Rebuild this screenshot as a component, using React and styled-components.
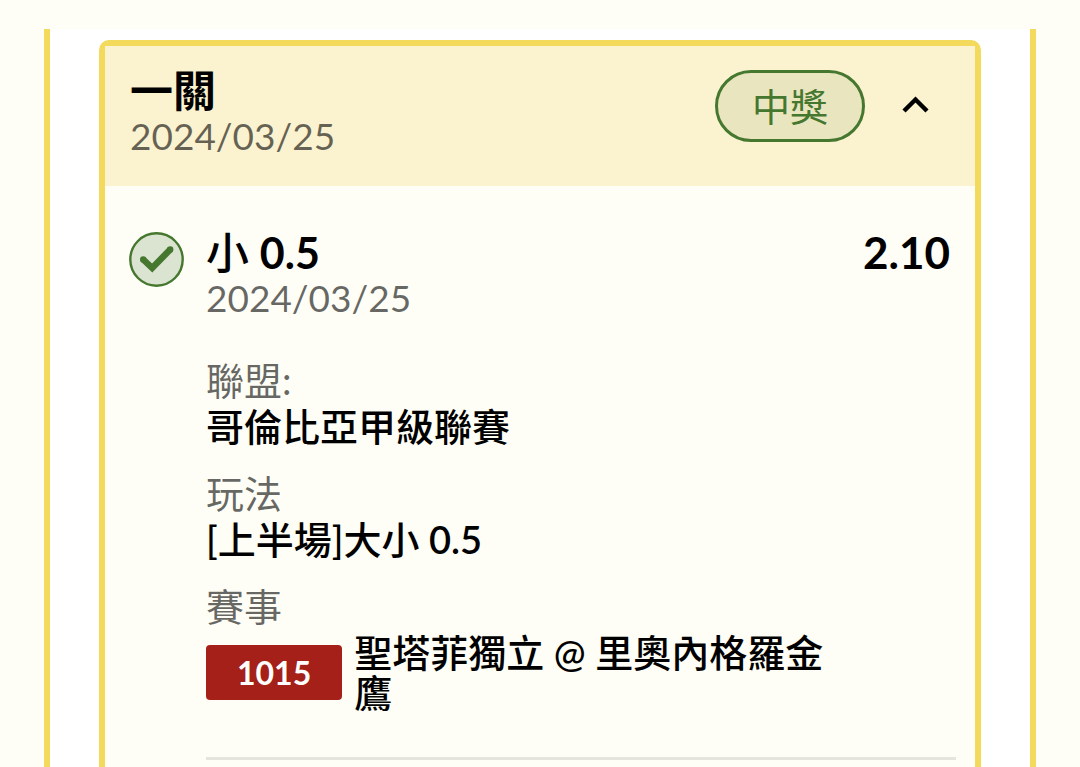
import React, { useState } from 'react';
import styled, { createGlobalStyle } from 'styled-components';

const colors = {
  page: '#fefef6',
  gold: '#f3d95c',
  header: '#fbf2cf',
  green: '#45772f',
  red: '#a52018',
  muted: 'rgba(0, 0, 0, 0.6)',
};

const GlobalStyle = createGlobalStyle`
  * {
    box-sizing: border-box;
  }

  body {
    margin: 0;
    background: ${colors.page};
    color: #000;
    font-family: Lato, 'Noto Sans CJK TC', sans-serif;
    font-size: 38px;
    line-height: 46px;
  }
`;

const Page = styled.main`
  display: flex;
  min-height: 100vh;
  padding: 29px 44px 0;
`;

const Panel = styled.section`
  flex: 1;
  display: flex;
  padding: 11px 49px 0;
  background: #fff;
  border: solid ${colors.gold};
  border-width: 0 6px;
`;

const Ticket = styled.article`
  flex: 1;
  min-width: 0;
  background: ${colors.page};
  border: 6px solid ${colors.gold};
  border-bottom: 0;
  border-radius: 10px 10px 0 0;
`;

const TicketHeader = styled.header`
  display: flex;
  justify-content: space-between;
  align-items: flex-start;
  padding: 22px 24px 27px 25px;
  background: ${colors.header};
`;

const Title = styled.h2`
  margin: 0;
  font-size: 43px;
  font-weight: ${({ $weight }) => $weight || 600};
  line-height: 45px;
`;

const DateText = styled.time`
  display: block;
  color: ${colors.muted};
  font-size: 37px;
`;

const HeaderActions = styled.div`
  display: flex;
  align-items: center;
  gap: 14px;
  padding-top: 2px;
`;

const StatusPill = styled.span`
  padding: 10px 34px;
  border: 3px solid ${colors.green};
  border-radius: 36px;
  background: #e9e5bf;
  color: ${colors.green};
`;

const ToggleButton = styled.button`
  display: flex;
  align-items: center;
  justify-content: center;
  width: 72px;
  height: 72px;
  padding: 0 0 4px;
  border: 0;
  background: none;
  color: inherit;
  cursor: pointer;
`;

const Selection = styled.div`
  display: flex;
  align-items: flex-start;
  gap: 21px;
  padding: 44px 19px 0 24px;
`;

const WonIcon = styled.svg`
  flex: none;
  margin-top: 2px;
`;

const SelectionBody = styled.div`
  flex: 1;
  min-width: 0;
  padding-bottom: 45px;
  border-bottom: 3px solid #e5e5dd;
`;

const SelectionHead = styled.div`
  display: flex;
  justify-content: space-between;
  align-items: flex-start;
  padding-right: 6px;
`;

const Figure = styled.span`
  font-weight: ${({ $weight }) => $weight || 600};
`;

const Odds = styled.strong`
  font-size: 44px;
  font-weight: 700;
  line-height: 45px;
`;

const Details = styled.dl`
  display: flex;
  flex-direction: column;
  gap: 21px;
  margin: 36px 0 0;
`;

const Label = styled.dt`
  color: ${colors.muted};
`;

const Value = styled.dd`
  margin: 0;
  font-weight: 500;
`;

const MatchValue = styled(Value)`
  display: flex;
  align-items: center;
  gap: 12px;
  padding-top: 3px;
  line-height: 40px;
`;

const MatchCode = styled.span`
  flex: none;
  padding: 8px 31px 7px;
  border-radius: 4px;
  background: ${colors.red};
  color: #fff;
  font-size: 32px;
  font-weight: 700;
`;

const Teams = styled.span`
  max-width: 480px;
`;

const CheckBadge = () => (
  <WonIcon width='56' height='56' viewBox='0 0 56 56' role='img' aria-label='中獎'>
    <circle cx='27.5' cy='27.5' r='26.2' fill='#dbe3d1' stroke={colors.green} strokeWidth='2.4' />
    <path
      d='M14.2 27.5 L23.2 36 L41.2 17.5'
      fill='none'
      stroke={colors.green}
      strokeWidth='6.5'
    />
    <circle cx='14.2' cy='27.5' r='3.2' fill={colors.green} />
    <circle cx='41.2' cy='17.5' r='3.2' fill={colors.green} />
  </WonIcon>
);

const Chevron = ({ open }) => (
  <svg width='28' height='20' viewBox='0 0 28 20' aria-hidden='true'>
    <path
      d={open ? 'M3 17 L14.5 5.5 L26 17' : 'M3 4 L14.5 15.5 L26 4'}
      fill='none'
      stroke='currentColor'
      strokeWidth='4.4'
    />
  </svg>
);

const DetailItem = ({ label, children }) => (
  <div>
    <Label>{label}</Label>
    <Value>{children}</Value>
  </div>
);

const App = () => {
  const [open, setOpen] = useState(true);

  return (
    <>
      <GlobalStyle />
      <Page>
        <Panel>
          <Ticket>
            <TicketHeader>
              <div>
                <Title>一關</Title>
                <DateText dateTime='2024-03-25'>2024/03/25</DateText>
              </div>
              <HeaderActions>
                <StatusPill>中獎</StatusPill>
                <ToggleButton
                  type='button'
                  aria-label='一關'
                  aria-expanded={open}
                  onClick={() => setOpen(!open)}
                >
                  <Chevron open={open} />
                </ToggleButton>
              </HeaderActions>
            </TicketHeader>
            {open && (
              <Selection>
                <CheckBadge />
                <SelectionBody>
                  <SelectionHead>
                    <div>
                      <Title as='h3' $weight={500}>
                        小 <Figure $weight={700}>0.5</Figure>
                      </Title>
                      <DateText dateTime='2024-03-25'>2024/03/25</DateText>
                    </div>
                    <Odds>2.10</Odds>
                  </SelectionHead>
                  <Details>
                    <DetailItem label='聯盟:'>哥倫比亞甲級聯賽</DetailItem>
                    <DetailItem label='玩法'>
                      [上半場]大小 <Figure>0.5</Figure>
                    </DetailItem>
                    <div>
                      <Label>賽事</Label>
                      <MatchValue>
                        <MatchCode>1015</MatchCode>
                        <Teams>聖塔菲獨立 @ 里奧內格羅金鷹</Teams>
                      </MatchValue>
                    </div>
                  </Details>
                </SelectionBody>
              </Selection>
            )}
          </Ticket>
        </Panel>
      </Page>
    </>
  );
};

export default App;
